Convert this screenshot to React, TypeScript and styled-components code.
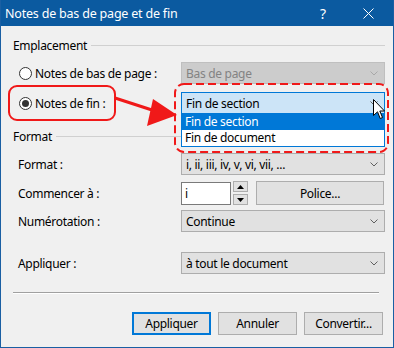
import styled, { createGlobalStyle } from "styled-components";

const GlobalStyle = createGlobalStyle`
  html, body { margin: 0; padding: 0; background: #f0f0f0; }
  body {
    font-family: "Noto Sans", "Liberation Sans", sans-serif;
    font-size: 12px;
    letter-spacing: -0.3px;
    color: #000;
  }
`;

const Frame = styled.div`
  position: relative;
  width: 394px;
  height: 348px;
`;

const Window = styled.div`
  box-sizing: border-box;
  width: 394px;
  height: 348px;
  border: 1px solid #1a5fa3;
  border-top: none;
  background: #f0f0f0;
  display: flex;
  flex-direction: column;
`;

const TitleBar = styled.div`
  height: 26px;
  flex: none;
  background: #0b5aa0;
  color: #fff;
  display: flex;
  align-items: center;
  padding-left: 4px;
  font-size: 12.5px;
  letter-spacing: -0.2px;
`;

const Title = styled.div`
  flex: 1;
`;

const TitleButton = styled.div<{ $w: number }>`
  width: ${(p) => p.$w}px;
  display: flex;
  justify-content: center;
  align-items: center;
  font-size: 14px;
`;

const Body = styled.div`
  flex: 1;
  display: flex;
  flex-direction: column;
  padding: 11px 8px 0 12px;
`;

const GroupHeader = styled.div<{ $top: number }>`
  margin-top: ${(p) => p.$top}px;
  height: 16px;
  display: flex;
  align-items: center;
  gap: 4px;
  &::after {
    content: "";
    flex: 1;
    height: 1px;
    background: #d0d0d0;
  }
`;

const Row = styled.div<{ $top: number; $h?: number }>`
  margin-top: ${(p) => p.$top}px;
  height: ${(p) => p.$h ?? 22}px;
  padding-left: 5px;
  display: grid;
  grid-template-columns: 163px 1fr;
  align-items: center;
`;

const Radio = styled.label`
  display: flex;
  align-items: center;
  gap: 3px;
  padding-left: 1px;
`;

const RadioDot = styled.span<{ $checked?: boolean }>`
  box-sizing: border-box;
  width: 13px;
  height: 13px;
  border-radius: 50%;
  border: 1px solid #333;
  background: #fff;
  display: flex;
  align-items: center;
  justify-content: center;
  &::after {
    content: "";
    width: 7px;
    height: 7px;
    border-radius: 50%;
    background: ${(p) => (p.$checked ? "#333" : "transparent")};
  }
`;

type ComboKind = "normal" | "disabled" | "active";

const ComboBox = styled.div<{ $kind: ComboKind }>`
  box-sizing: border-box;
  height: 100%;
  display: flex;
  align-items: center;
  padding: 0 6px 0 4px;
  border: 1px solid
    ${(p) =>
      p.$kind === "active" ? "#0078d7" : p.$kind === "disabled" ? "#bfbfbf" : "#adadad"};
  background: ${(p) =>
    p.$kind === "active" ? "#cce4f7" : p.$kind === "disabled" ? "#cccccc" : "#e1e1e1"};
  color: ${(p) => (p.$kind === "disabled" ? "#838383" : "#000")};
`;

const ComboText = styled.span`
  flex: 1;
  white-space: nowrap;
`;

const Chevron = ({ color }: { color: string }) => (
  <svg width="8" height="5" viewBox="0 0 8 5">
    <polyline points="0.5,0.5 4,4 7.5,0.5" fill="none" stroke={color} strokeWidth="1" />
  </svg>
);

const Combo = ({ text, kind = "normal" }: { text: string; kind?: ComboKind }) => (
  <ComboBox $kind={kind}>
    <ComboText>{text}</ComboText>
    <Chevron color={kind === "disabled" ? "#a8a8a8" : "#606060"} />
  </ComboBox>
);

const StartControls = styled.div`
  height: 100%;
  display: flex;
  align-items: center;
`;

const NumberInput = styled.div`
  box-sizing: border-box;
  width: 50px;
  height: 23px;
  border: 1px solid #7a7a7a;
  background: #fff;
  padding-left: 3px;
  display: flex;
  align-items: center;
`;

const Spin = styled.div`
  margin-left: 2px;
  display: flex;
  flex-direction: column;
  gap: 2px;
`;

const SpinButton = styled.div`
  box-sizing: border-box;
  width: 15px;
  height: 11px;
  border: 1px solid #adadad;
  background: #e1e1e1;
  display: flex;
  align-items: center;
  justify-content: center;
`;

const PushButton = styled.div<{ $default?: boolean; $w?: number }>`
  box-sizing: border-box;
  height: ${(p) => (p.$w ? 23 : 24)}px;
  width: ${(p) => (p.$w ? `${p.$w}px` : "auto")};
  flex: ${(p) => (p.$w ? "none" : 1)};
  border: ${(p) => (p.$default ? "2px solid #0078d7" : "1px solid #adadad")};
  background: #e1e1e1;
  display: flex;
  align-items: center;
  justify-content: center;
`;

const PoliceButton = styled(PushButton)`
  margin-left: 8px;
  margin-right: 1px;
`;

const Separator = styled.div`
  margin-top: 18px;
  margin-right: 6px;
  height: 1px;
  background: #a0a0a0;
  border-bottom: 1px solid #fff;
`;

const ButtonBar = styled.div`
  margin-top: 18px;
  margin-right: 2px;
  display: flex;
  justify-content: flex-end;
  gap: 7px;
`;

/* overlays: open list, annotations, cursor */

const DropList = styled.div`
  position: absolute;
  left: 181px;
  top: 114px;
  width: 204px;
  box-sizing: border-box;
  border: 1px solid #0078d7;
  border-top: none;
  background: #fff;
`;

const DropItem = styled.div<{ $selected?: boolean }>`
  height: 16px;
  line-height: 16px;
  padding-left: 3px;
  background: ${(p) => (p.$selected ? "#0078d7" : "#fff")};
  color: ${(p) => (p.$selected ? "#fff" : "#000")};
`;

const Callout = styled.div`
  position: absolute;
  left: 8px;
  top: 85px;
  width: 108px;
  height: 36px;
  box-sizing: border-box;
  border: 2px solid #f01919;
  border-radius: 9px;
`;

const Annotations = styled.svg`
  position: absolute;
  left: 0;
  top: 0;
  pointer-events: none;
`;

const Cursor = styled.svg`
  position: absolute;
  left: 373px;
  top: 99px;
`;

const Triangle = ({ up }: { up?: boolean }) => (
  <svg width="7" height="4" viewBox="0 0 7 4">
    <polygon points={up ? "0,4 7,4 3.5,0" : "0,0 7,0 3.5,4"} fill="#000" />
  </svg>
);

export default function App() {
  return (
    <Frame>
      <GlobalStyle />
      <Window>
        <TitleBar>
          <Title>Notes de bas de page et de fin</Title>
          <TitleButton $w={40}>?</TitleButton>
          <TitleButton $w={50}>
            <svg width="11" height="11" viewBox="0 0 11 11">
              <path d="M0.5 0.5 L10.5 10.5 M10.5 0.5 L0.5 10.5" stroke="#fff" strokeWidth="1" />
            </svg>
          </TitleButton>
        </TitleBar>
        <Body>
          <GroupHeader $top={0}>Emplacement</GroupHeader>
          <Row $top={9}>
            <Radio>
              <RadioDot />
              Notes de bas de page :
            </Radio>
            <Combo text="Bas de page" kind="disabled" />
          </Row>
          <Row $top={8}>
            <Radio>
              <RadioDot $checked />
              Notes de fin :
            </Radio>
            <Combo text="Fin de section" kind="active" />
          </Row>

          <GroupHeader $top={14}>Format</GroupHeader>
          <Row $top={9}>
            <span>Format :</span>
            <Combo text="i, ii, iii, iv, v, vi, vii, ..." />
          </Row>
          <Row $top={6} $h={24}>
            <span>Commencer à :</span>
            <StartControls>
              <NumberInput>i</NumberInput>
              <Spin>
                <SpinButton>
                  <Triangle up />
                </SpinButton>
                <SpinButton>
                  <Triangle />
                </SpinButton>
              </Spin>
              <PoliceButton>Police...</PoliceButton>
            </StartControls>
          </Row>
          <Row $top={5}>
            <span>Numérotation :</span>
            <Combo text="Continue" />
          </Row>
          <Row $top={20}>
            <span>Appliquer :</span>
            <Combo text="à tout le document" />
          </Row>

          <Separator />
          <ButtonBar>
            <PushButton $default $w={79}>Appliquer</PushButton>
            <PushButton $w={79}>Annuler</PushButton>
            <PushButton $w={79}>Convertir...</PushButton>
          </ButtonBar>
        </Body>
      </Window>

      <DropList>
        <DropItem $selected>Fin de section</DropItem>
        <DropItem>Fin de document</DropItem>
      </DropList>

      <Callout />
      <Annotations width="394" height="348" viewBox="0 0 394 348">
        <rect
          x="175"
          y="84"
          width="213"
          height="68"
          rx="9"
          fill="none"
          stroke="#f01919"
          strokeWidth="2"
          strokeDasharray="8 4"
        />
        <line x1="115" y1="98" x2="152" y2="110" stroke="#f01919" strokeWidth="3" />
        <polygon points="177,115 147,126 153,99" fill="#f01919" />
      </Annotations>

      <Cursor width="13" height="21" viewBox="0 0 13 21">
        <path
          d="M0.5 0.5 L0.5 16.5 L4.5 12.8 L7.2 19.5 L9.5 18.5 L6.8 12 L11.5 12 Z"
          fill="#fff"
          stroke="#000"
          strokeWidth="1"
          strokeLinejoin="round"
        />
      </Cursor>
    </Frame>
  );
}
